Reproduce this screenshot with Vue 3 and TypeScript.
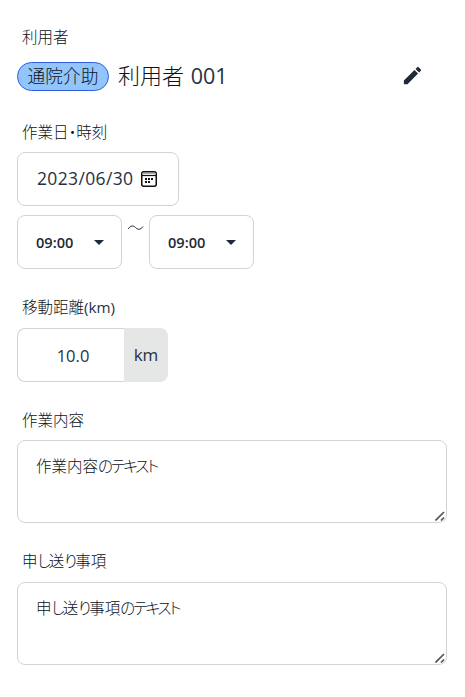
<script setup lang="ts">
import { ref } from 'vue'

interface Note {
  id: string
  label: [string, string][]
  text: [string, string][]
}

const client = ref('利用者')
const clientNo = ref('001')
const service = ref('通院介助')
const date = ref('2023/06/30')
const start = ref('09:00')
const end = ref('09:00')
const distance = ref('10.0')

const notes: Note[] = [
  {
    id: 'work',
    label: [['kanji', '作業内容']],
    text: [['kanji', '作業内容'], ['kana', 'のテキスト']],
  },
  {
    id: 'handover',
    label: [['kanji', '申'], ['kana', 'し'], ['kanji', '送'], ['kana', 'り'], ['kanji', '事項']],
    text: [['kanji', '申'], ['kana', 'し'], ['kanji', '送'], ['kana', 'り'], ['kanji', '事項'], ['kana', 'のテキスト']],
  },
]
</script>

<template>
  <main class="form">
    <section class="field client-field">
      <div class="label first">利用者</div>
      <div class="client">
        <span class="badge">{{ service }}</span>
        <span class="name">{{ client }} <span class="number">{{ clientNo }}</span></span>
        <button class="edit" type="button" aria-label="編集">
          <svg viewBox="0 0 24 24" width="23" height="23">
            <path d="M3 17.25V21h3.75L17.81 9.94l-3.75-3.75L3 17.25zM20.71 7.04a1 1 0 0 0 0-1.41l-2.34-2.34a1 1 0 0 0-1.41 0l-1.83 1.83 3.75 3.75 1.83-1.83z" />
          </svg>
        </button>
      </div>
    </section>

    <section class="field date-field">
      <div class="label dated">作業日・時刻</div>
      <div class="box date">
        <span>{{ date }}</span>
        <svg class="calendar" viewBox="0 0 16 16" width="16" height="16">
          <rect x=".75" y=".75" width="14.5" height="14.5" rx="2" fill="none" stroke="#111" stroke-width="1.5" />
          <path d="M1 2.500h14" stroke="#aaa" stroke-width="1" />
          <path d="M1 4.500h14" stroke="#111" stroke-width="1.2" />
          <path d="M4 7h2v2H4zM7 7h2v2H7zM10 7h2v2h-2zM4 10h2v2H4zM7 10h2v2H7z" fill="#111" />
        </svg>
      </div>
      <div class="times">
        <div class="box time"><span>{{ start }}</span><i class="caret"></i></div>
        <svg class="wave" width="17" height="8" viewBox="0 0 17 8" aria-label="〜">
          <path d="M1 5C4 1 6.500 1.500 8.500 3.500S13 6.500 16 2.500" fill="none" stroke="#1f2937" />
        </svg>
        <div class="box time"><span>{{ end }}</span><i class="caret"></i></div>
      </div>
    </section>

    <section class="field distance-field">
      <div class="label">移動距離<span class="unit-label">(km)</span></div>
      <div class="distance">
        <div class="box amount">{{ distance }}</div>
        <div class="unit">km</div>
      </div>
    </section>

    <section v-for="note in notes" :key="note.id" class="field" :class="note.id">
      <div class="label"><span v-for="([kind, part], i) in note.label" :key="i" :class="kind">{{ part }}</span></div>
      <div class="box area">
        <span v-for="([kind, part], i) in note.text" :key="i" :class="kind">{{ part }}</span>
        <svg class="grip" width="10" height="10" viewBox="0 0 10 10">
          <path d="M.5 9.500 9 1M6 9.500 9 6.500" fill="none" stroke="#555" stroke-width="1.700" />
        </svg>
      </div>
    </section>
  </main>
</template>

<style>
body {
  background: #fff;
}
</style>

<style scoped>
.form {
  box-sizing: border-box;
  width: 465px;
  height: 697px;
  padding: 22px 18px 0 17px;
  color: #0b1220;
  font-family: "Open Sans", "Noto Sans CJK JP", sans-serif;
  font-weight: 300;
  font-size: 16px;
}
.field {
  display: flex;
  flex-direction: column;
}
.label {
  flex: none;
  height: 35px;
  padding-left: 5px;
  line-height: 30px;
  font-size: 15.5px;
  white-space: nowrap;
}
.first {
  height: 30px;
}
.dated {
  font-feature-settings: "palt";
}
.unit-label {
  color: #273142;
  font-weight: 400;
  font-size: 15.2px;
}
.kana {
  font-feature-settings: "palt";
  letter-spacing: -1.9px;
}
.client {
  display: flex;
  align-items: center;
  height: 48px;
}
.badge {
  box-sizing: border-box;
  width: 92px;
  height: 29px;
  border: 1px solid #2f5fe0;
  border-radius: 15px;
  background: #93c5fd;
  text-align: center;
  line-height: 26px;
  font-size: 17.7px;
}
.name {
  margin: -2px 0 0 9px;
  font-size: 22px;
  line-height: 30px;
}
.number {
  margin-left: 1px;
  color: #273142;
  font-weight: 400;
  font-size: 21.5px;
}
.edit {
  display: flex;
  margin: -2px 23px 0 auto;
  padding: 0;
  border: 0;
  background: none;
}
.edit svg {
  fill: #1f2937;
}
.client-field {
  height: 95px;
}
.date-field {
  height: 175px;
}
.distance-field {
  height: 113px;
}
.work {
  height: 142px;
}
.handover .label {
  line-height: 28px;
}
.box {
  box-sizing: border-box;
  border: 1px solid #d2d3d5;
  border-radius: 8px;
  background: #fff;
}
.date {
  display: flex;
  align-items: center;
  width: 162px;
  height: 54px;
  padding-left: 19px;
  color: #273142;
  font-weight: 400;
  font-size: 17.5px;
  letter-spacing: 0.35px;
}
.date span {
  width: 97px;
  margin-top: -2px;
}
.calendar {
  margin-left: 7px;
}
.times {
  display: flex;
  margin-top: 9px;
}
.time {
  display: flex;
  align-items: center;
  width: 105px;
  height: 54px;
  padding-left: 18px;
  font-size: 14.6px;
  font-weight: 600;
  color: #1f2937;
}
.time span {
  width: 40px;
}
.caret {
  margin-left: 18px;
  border: 5px solid transparent;
  border-top-color: #1f2937;
  border-bottom: 0;
}
.wave {
  margin: 9px 5px 0;
}
.distance {
  display: flex;
  margin-top: 1px;
  color: #273142;
  font-weight: 400;
}
.amount {
  width: 107px;
  height: 54px;
  border-right: 0;
  border-radius: 8px 0 0 8px;
  text-align: center;
  line-height: 53px;
  padding-left: 4px;
  font-size: 16.5px;
}
.unit {
  width: 44px;
  height: 54px;
  border-radius: 0 8px 8px 0;
  background: #e5e6e6;
  text-align: center;
  line-height: 53px;
  font-size: 17px;
}
.area {
  position: relative;
  width: 430px;
  height: 83px;
  padding: 10px 18px;
  font-size: 15.5px;
  line-height: 30px;
}
.grip {
  position: absolute;
  right: 1px;
  bottom: 1px;
}
</style>
